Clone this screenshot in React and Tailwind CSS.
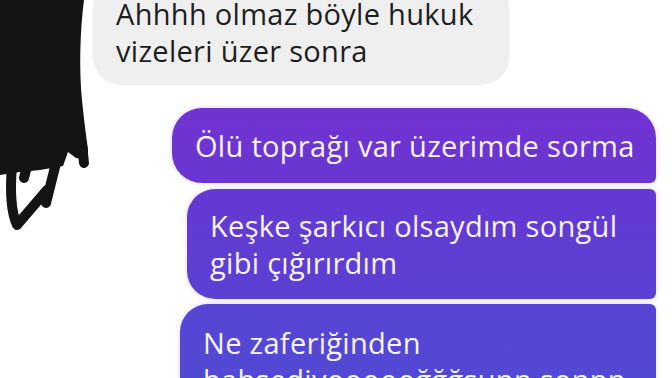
import React from 'react';

const Scribble = () => (
  <svg className="absolute left-0 top-0" width="100" height="240" viewBox="0 0 100 240">
    <path d="M0 0 H84 C80 30 79 70 82 100 C84 120 86 135 88 150 L88 160 L76 158 L68 152 L63 166 L40 170 L20 172 L0 175 Z" fill="#141414" />
    <g stroke="#141414" strokeWidth="10" strokeLinecap="round" strokeLinejoin="round" fill="none">
      <path d="M82 145 L84 163" />
      <path d="M58 155 L46 203" />
      <path d="M12 166 C10 190 11 212 17 225 L47 190" />
      <path d="M27 166 L24 178" />
    </g>
  </svg>
);

const App = () => {
  return (
    <div className="relative w-[672px] h-[378px] overflow-hidden bg-white font-['Open_Sans',sans-serif] text-[29px] leading-[37px] tracking-[0.3px]">
      <Scribble />
      <div className="flex flex-col">
        <div className="ml-[93px] mt-[-23px] w-[416px] rounded-[28px] bg-[#efefef] pl-[23px] pt-[18px] pb-[16px] text-[#1e1e1e]">
          Ahhhh olmaz böyle hukuk<br />vizeleri üzer sonra
        </div>

        <div className="mt-[23px] mr-[16px] self-end w-[484px] rounded-[30px] rounded-br-[6px] bg-gradient-to-b from-[#7133d1] to-[#6836d2] pl-[23px] py-[19px] text-[#f7f3ff] shadow-[0_0_5px_rgba(140,80,220,0.25)]">
          Ölü toprağı var üzerimde sorma
        </div>

        <div className="mt-[6px] mr-[16px] self-end w-[469px] rounded-l-[28px] rounded-r-[6px] bg-gradient-to-b from-[#6538d3] to-[#5a40d3] pl-[23px] py-[18px] text-[#f7f3ff] shadow-[0_0_5px_rgba(140,80,220,0.25)]">
          Keşke şarkıcı olsaydım songül<br />gibi çığırırdım
        </div>

        <div className="mt-[5px] mr-[16px] self-end w-[476px] rounded-l-[28px] rounded-r-[6px] bg-gradient-to-b from-[#5745d4] to-[#4f4bd3] pl-[23px] pt-[20px] pb-[18px] text-[#f7f3ff] shadow-[0_0_5px_rgba(140,80,220,0.25)]">
          Ne zaferiğinden<br />bahsediyoooooğğğsunn sonnn
        </div>
      </div>
    </div>
  );
};

export default App;
